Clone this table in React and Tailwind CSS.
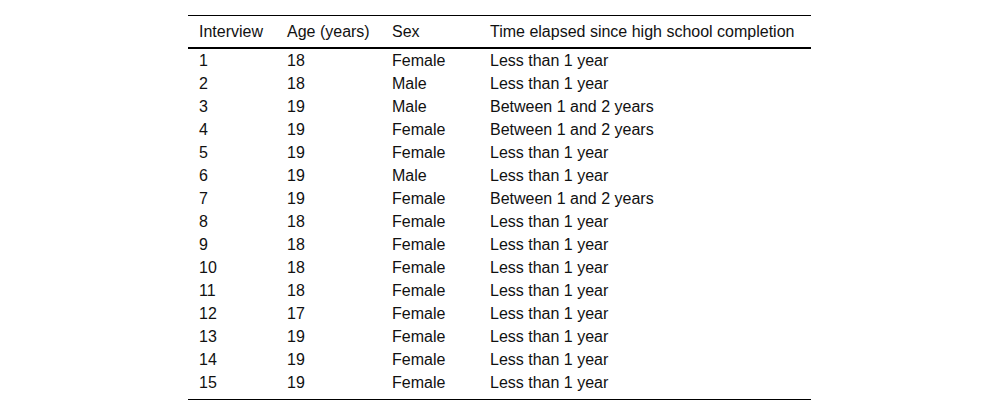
const rows = [
  ["1", "18", "Female", "Less than 1 year"],
  ["2", "18", "Male", "Less than 1 year"],
  ["3", "19", "Male", "Between 1 and 2 years"],
  ["4", "19", "Female", "Between 1 and 2 years"],
  ["5", "19", "Female", "Less than 1 year"],
  ["6", "19", "Male", "Less than 1 year"],
  ["7", "19", "Female", "Between 1 and 2 years"],
  ["8", "18", "Female", "Less than 1 year"],
  ["9", "18", "Female", "Less than 1 year"],
  ["10", "18", "Female", "Less than 1 year"],
  ["11", "18", "Female", "Less than 1 year"],
  ["12", "17", "Female", "Less than 1 year"],
  ["13", "19", "Female", "Less than 1 year"],
  ["14", "19", "Female", "Less than 1 year"],
  ["15", "19", "Female", "Less than 1 year"],
];

export default function App() {
  return (
    <div className="flex h-[415px] w-[1000px] justify-center bg-white pt-[15px] font-['Liberation_Sans',Arial,sans-serif] text-[16px] text-[#111]">
      <div className="ml-[-1px] h-fit w-[623px] border-y border-black pb-[5px]">
        <div className="grid h-[33px] grid-cols-[88px_105px_98px_1fr] items-center border-b-2 border-black pl-[11px]">
          <div>Interview</div>
          <div>Age (years)</div>
          <div>Sex</div>
          <div>Time elapsed since high school completion</div>
        </div>
        {rows.map((r, idx) => (
          <div
            key={idx}
            className="grid h-[23px] grid-cols-[88px_105px_98px_1fr] items-center pl-[11px]"
          >
            <div>{r[0]}</div>
            <div>{r[1]}</div>
            <div>{r[2]}</div>
            <div>{r[3]}</div>
          </div>
        ))}
      </div>
    </div>
  );
}
